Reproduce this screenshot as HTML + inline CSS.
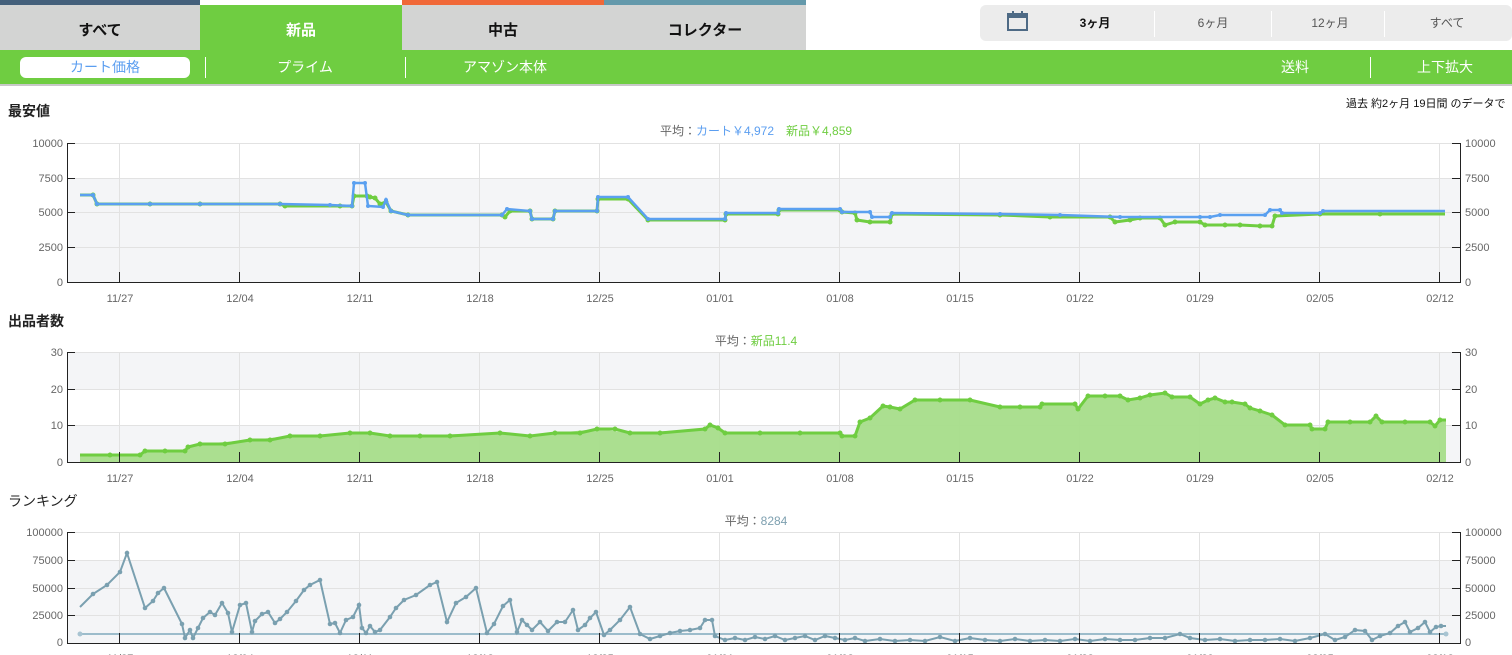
<!DOCTYPE html>
<html><head><meta charset="utf-8"><style>
*{margin:0;padding:0;box-sizing:border-box}
body{width:1512px;height:655px;overflow:hidden;background:#fff;font-family:"Liberation Sans","Noto Sans CJK JP",sans-serif;position:relative}
.a{position:absolute}
.tab{position:absolute;top:5px;height:45px;background:#d3d4d3;font-weight:bold;font-size:15px;text-align:center;line-height:52px;color:#111}
.sub{position:absolute;top:50px;left:0;width:1512px;height:36px;background:#6fcd41;border-bottom:2px solid #c8c8c8}
.sub span{position:absolute;top:0;line-height:34px;color:#fff;font-size:14px;text-align:center}
.sep{position:absolute;top:7px;width:1px;height:21px;background:#fff}
.ttl{position:absolute;left:8px;font-size:14px;font-weight:bold;color:#222}
</style></head><body>
<div class="a" style="left:0;top:0;width:200px;height:5px;background:#44607b"></div>
<div class="a" style="left:402px;top:0;width:202px;height:5px;background:#f06838"></div>
<div class="a" style="left:604px;top:0;width:202px;height:5px;background:#6499ab"></div>
<div class="tab" style="left:0;width:200px">すべて</div>
<div class="tab" style="left:200px;top:5px;width:202px;background:#6fcd41;color:#fff">新品</div>
<div class="tab" style="left:402px;width:202px">中古</div>
<div class="tab" style="left:604px;width:202px">コレクター</div>
<div class="a" style="left:980px;top:5px;width:532px;height:36px;background:#ececec;border-radius:6px"></div>
<svg class="a" style="left:1006px;top:10px" width="24" height="22" viewBox="0 0 24 22"><rect x="2" y="4" width="19" height="16" fill="none" stroke="#4e6a85" stroke-width="2"/><rect x="2" y="4" width="19" height="4" fill="#4e6a85"/><rect x="6" y="1" width="2" height="5" fill="#4e6a85"/><rect x="15" y="1" width="2" height="5" fill="#4e6a85"/></svg>
<div class="a" style="left:1060px;top:14px;width:70px;text-align:center;font-size:12px;font-weight:bold;color:#111">3ヶ月</div>
<div class="a" style="left:1154px;top:11px;width:1px;height:26px;background:#fff"></div>
<div class="a" style="left:1178px;top:14px;width:70px;text-align:center;font-size:12px;color:#555">6ヶ月</div>
<div class="a" style="left:1271px;top:11px;width:1px;height:26px;background:#fff"></div>
<div class="a" style="left:1295px;top:14px;width:70px;text-align:center;font-size:12px;color:#555">12ヶ月</div>
<div class="a" style="left:1384px;top:11px;width:1px;height:26px;background:#fff"></div>
<div class="a" style="left:1412px;top:14px;width:70px;text-align:center;font-size:12px;color:#555">すべて</div>
<div class="sub">
<div class="a" style="left:20px;top:7px;width:170px;height:21px;background:#fff;border-radius:6px"></div>
<span style="left:20px;width:170px;color:#5b9ef0">カート価格</span>
<div class="sep" style="left:205px"></div>
<span style="left:220px;width:170px">プライム</span>
<div class="sep" style="left:405px"></div>
<span style="left:420px;width:170px">アマゾン本体</span>
<span style="left:1245px;width:100px">送料</span>
<div class="sep" style="left:1370px"></div>
<span style="left:1385px;width:120px">上下拡大</span>
</div>
<div class="ttl" style="top:101px">最安値</div>
<div class="a" style="left:1346px;top:95px;font-size:11px;color:#111;white-space:nowrap">過去 約2ヶ月 19日間 のデータで</div>
<div class="a" style="left:0;top:122px;width:1512px;text-align:center;font-size:12px;color:#666">平均：<span style="color:#5b9ef0">カート￥4,972</span>　<span style="color:#6fcd41">新品￥4,859</span></div>
<div class="ttl" style="top:311px">出品者数</div>
<div class="a" style="left:0;top:332px;width:1512px;text-align:center;font-size:12px;color:#666">平均：<span style="color:#6fcd41">新品11.4</span></div>
<div class="ttl" style="top:491px;font-weight:normal">ランキング</div>
<div class="a" style="left:0;top:512px;width:1512px;text-align:center;font-size:12px;color:#666">平均：<span style="color:#7ea0b0">8284</span></div>

<svg class="a" style="left:0;top:0" width="1512" height="655" font-family="Liberation Sans, sans-serif" font-size="11" fill="#666">
<defs>
<marker id="mb" markerWidth="4" markerHeight="4" refX="2" refY="2" markerUnits="userSpaceOnUse"><circle cx="2" cy="2" r="2" fill="#5aa0f0"/></marker>
<marker id="mg" markerWidth="5" markerHeight="5" refX="2.5" refY="2.5" markerUnits="userSpaceOnUse"><circle cx="2.5" cy="2.5" r="2.5" fill="#6fcd41"/></marker>
<marker id="mr" markerWidth="5" markerHeight="5" refX="2.5" refY="2.5" markerUnits="userSpaceOnUse"><circle cx="2.5" cy="2.5" r="2.3" fill="#7aa0b0"/></marker>
</defs>
<!-- chart1 -->
<rect x="67" y="178" width="1393" height="104" fill="#f4f5f7"/>
<g stroke="#e2e2e2" stroke-width="1" fill="none">
<line x1="67" y1="143.5" x2="1460" y2="143.5"/><line x1="67" y1="178.5" x2="1460" y2="178.5"/><line x1="67" y1="212.5" x2="1460" y2="212.5"/><line x1="67" y1="247.5" x2="1460" y2="247.5"/>
<path d="M119.5 143V282M239.5 143V282M359.5 143V282M479.5 143V282M599.5 143V282M719.5 143V282M839.5 143V282M959.5 143V282M1079.5 143V282M1199.5 143V282M1319.5 143V282M1439.5 143V282"/>
</g>
<polyline fill="none" stroke="#6fcd41" stroke-width="3" marker-mid="url(#mg)" points="80,195 93,195 97,204 150,204 200,204 280,204 285,206 340,206 352,206 354,196 367,196 370,197 375,198 380,204 386,202 391,211 408,215 502,215 505,217 510,211 530,211 532,219 553,219 555,211 597,211 598,199 628,199 648,220 725,220 726,214 778,214 779,210 840,210 842,212 855,213 857,220 870,222 890,222 892,214 1000,215 1050,217 1110,217 1115,222 1130,220 1140,218 1160,218 1165,225 1175,222 1200,222 1205,225 1225,225 1240,225 1260,226 1272,226 1275,216 1320,214 1380,214 1445,214"/>
<polyline fill="none" stroke="#5aa0f0" stroke-width="2.5" marker-mid="url(#mb)" points="80,195 93,195 97,204 150,204 200,204 280,204 330,205 352,206 354,183 365,183 368,206 383,207 386,200 391,211 408,215 502,215 507,209 530,211 532,219 553,219 555,211 597,211 598,197 628,197 648,219 725,219 726,213 778,213 779,209 840,209 842,212 870,212 872,217 890,217 892,213 1000,214 1060,215 1120,217 1200,217 1210,217 1220,215 1265,215 1270,210 1280,210 1282,213 1320,213 1323,211 1445,211"/>
<g stroke="#222" stroke-width="1" fill="none"><path d="M67.5 143V282.5H1460.5V143M67 143.5h8M67 178.5h8M67 212.5h8M67 247.5h8M1460 143.5h-8M1460 178.5h-8M1460 212.5h-8M1460 247.5h-8"/>
<path d="M119.5 282V272M239.5 282V272M359.5 282V272M479.5 282V272M599.5 282V272M719.5 282V272M839.5 282V272M959.5 282V272M1079.5 282V272M1199.5 282V272M1319.5 282V272M1439.5 282V272"/></g>
<g text-anchor="end"><text x="63" y="147">10000</text><text x="63" y="182">7500</text><text x="63" y="216">5000</text><text x="63" y="251">2500</text><text x="63" y="286">0</text></g>
<g><text x="1465" y="147">10000</text><text x="1465" y="182">7500</text><text x="1465" y="216">5000</text><text x="1465" y="251">2500</text><text x="1465" y="286">0</text></g>
<g text-anchor="middle"><text x="120" y="302">11/27</text><text x="240" y="302">12/04</text><text x="360" y="302">12/11</text><text x="480" y="302">12/18</text><text x="600" y="302">12/25</text><text x="720" y="302">01/01</text><text x="840" y="302">01/08</text><text x="960" y="302">01/15</text><text x="1080" y="302">01/22</text><text x="1200" y="302">01/29</text><text x="1320" y="302">02/05</text><text x="1440" y="302">02/12</text></g>
<!-- chart2 -->
<rect x="67" y="352" width="1393" height="37" fill="#f4f5f7"/><rect x="67" y="425" width="1393" height="37" fill="#f4f5f7"/>
<g stroke="#e2e2e2" fill="none"><line x1="67" y1="352.5" x2="1460" y2="352.5"/><line x1="67" y1="389.5" x2="1460" y2="389.5"/><line x1="67" y1="425.5" x2="1460" y2="425.5"/>
<path d="M119.5 352V462M239.5 352V462M359.5 352V462M479.5 352V462M599.5 352V462M719.5 352V462M839.5 352V462M959.5 352V462M1079.5 352V462M1199.5 352V462M1319.5 352V462M1439.5 352V462"/></g>
<polygon fill="#a6dd8a" opacity="0.95" points="80,462 80,455 140,455 145,451 185,451 188,447 200,444 250,440 290,436 350,433 390,436 500,433 530,436 555,433 597,429 630,433 705,429 710,425 718,428 725,433 840,433 842,436 855,436 860,422 870,418 883,406 890,407 900,409 915,400 970,400 1000,407 1040,407 1042,404 1075,404 1078,409 1088,396 1120,396 1128,400 1140,398 1150,395 1165,393 1172,397 1190,397 1200,404 1208,400 1215,398 1225,402 1232,402 1245,404 1250,408 1260,411 1272,415 1285,425 1310,425 1312,429 1325,429 1328,422 1370,422 1376,416 1382,422 1430,422 1435,426 1440,420 1446,420 1446,462"/>
<polyline fill="none" stroke="#6fcd41" stroke-width="3" marker-mid="url(#mg)" points="80,455 110,455 140,455 145,451 165,451 185,451 188,447 200,444 225,444 250,440 270,440 290,436 320,436 350,433 370,433 390,436 420,436 450,436 500,433 530,436 555,433 580,433 597,429 615,429 630,433 660,433 705,429 710,425 718,428 725,433 760,433 800,433 840,433 842,436 855,436 860,422 870,418 883,406 890,407 900,409 915,400 940,400 970,400 1000,407 1020,407 1040,407 1042,404 1075,404 1078,409 1088,396 1105,396 1120,396 1128,400 1140,398 1150,395 1165,393 1172,397 1190,397 1200,404 1208,400 1215,398 1225,402 1232,402 1245,404 1250,408 1260,411 1272,415 1285,425 1310,425 1312,429 1325,429 1328,422 1350,422 1370,422 1376,416 1382,422 1405,422 1430,422 1435,426 1440,420 1446,420"/>
<g stroke="#222" fill="none"><path d="M67.5 352V462.5H1460.5V352M67 352.5h8M67 389.5h8M67 425.5h8M1460 352.5h-8M1460 389.5h-8M1460 425.5h-8"/>
<path d="M119.5 462V452M239.5 462V452M359.5 462V452M479.5 462V452M599.5 462V452M719.5 462V452M839.5 462V452M959.5 462V452M1079.5 462V452M1199.5 462V452M1319.5 462V452M1439.5 462V452"/></g>
<g text-anchor="end"><text x="63" y="356">30</text><text x="63" y="393">20</text><text x="63" y="429">10</text><text x="63" y="466">0</text></g>
<g><text x="1465" y="356">30</text><text x="1465" y="393">20</text><text x="1465" y="429">10</text><text x="1465" y="466">0</text></g>
<g text-anchor="middle"><text x="120" y="482">11/27</text><text x="240" y="482">12/04</text><text x="360" y="482">12/11</text><text x="480" y="482">12/18</text><text x="600" y="482">12/25</text><text x="720" y="482">01/01</text><text x="840" y="482">01/08</text><text x="960" y="482">01/15</text><text x="1080" y="482">01/22</text><text x="1200" y="482">01/29</text><text x="1320" y="482">02/05</text><text x="1440" y="482">02/12</text></g>
<!-- chart3 -->
<rect x="67" y="560" width="1393" height="83" fill="#f4f5f7"/>
<g stroke="#e2e2e2" fill="none"><line x1="67" y1="532.5" x2="1460" y2="532.5"/><line x1="67" y1="560.5" x2="1460" y2="560.5"/><line x1="67" y1="588.5" x2="1460" y2="588.5"/><line x1="67" y1="615.5" x2="1460" y2="615.5"/>
<path d="M119.5 532V643M239.5 532V643M359.5 532V643M479.5 532V643M599.5 532V643M719.5 532V643M839.5 532V643M959.5 532V643M1079.5 532V643M1199.5 532V643M1319.5 532V643M1439.5 532V643"/></g>
<line x1="80" y1="634" x2="1446" y2="634" stroke="#9cbccb" stroke-width="2"/>
<circle cx="80" cy="634" r="2.5" fill="#a8c4d2"/><circle cx="1446" cy="634" r="2.5" fill="#a8c4d2"/>
<polyline fill="none" stroke="#7aa0b0" stroke-width="2" marker-mid="url(#mr)" points="80,607 93,594 107,585 120,572 127,553 145,608 153,601 158,593 164,588 182,624 185,638 190,630 193,638 198,628 203,618 210,612 215,615 222,603 228,613 232,632 240,605 246,603 252,632 255,621 262,614 268,612 275,623 280,619 287,612 296,601 304,590 310,585 320,580 330,624 335,623 340,633 346,620 353,617 359,605 362,628 366,633 370,626 375,632 380,630 390,617 396,608 404,600 416,595 430,585 437,582 447,622 456,603 466,597 476,588 487,633 494,624 503,606 510,600 517,632 522,620 527,625 532,630 540,622 548,631 557,622 565,622 573,610 578,630 585,625 590,618 596,612 604,635 610,630 620,620 630,607 640,634 650,639 660,636 670,633 680,631 690,630 700,628 705,620 712,620 715,636 725,640 735,638 745,640 755,637 765,639 775,636 785,640 795,638 805,636 815,640 825,636 835,638 845,640 855,638 865,641 880,639 895,641 910,640 925,641 940,637 955,641 970,638 985,640 1000,641 1015,639 1030,641 1045,640 1060,641 1075,639 1090,641 1105,639 1120,640 1135,640 1150,638 1165,638 1180,634 1190,638 1205,640 1220,639 1235,641 1250,640 1265,640 1280,639 1295,641 1310,638 1325,634 1335,640 1345,637 1355,630 1365,631 1372,640 1380,636 1390,633 1398,626 1405,622 1410,632 1418,628 1425,622 1430,632 1436,627 1441,626 1446,626"/>
<g stroke="#222" fill="none"><path d="M67.5 532V643.5H1460.5V532M67 532.5h8M67 560.5h8M67 588.5h8M67 615.5h8M1460 532.5h-8M1460 560.5h-8M1460 588.5h-8M1460 615.5h-8"/>
<path d="M119.5 643V633M239.5 643V633M359.5 643V633M479.5 643V633M599.5 643V633M719.5 643V633M839.5 643V633M959.5 643V633M1079.5 643V633M1199.5 643V633M1319.5 643V633M1439.5 643V633"/></g>
<g text-anchor="end"><text x="63" y="536">100000</text><text x="63" y="564">75000</text><text x="63" y="592">50000</text><text x="63" y="619">25000</text><text x="63" y="646">0</text></g>
<g><text x="1465" y="536">100000</text><text x="1465" y="564">75000</text><text x="1465" y="592">50000</text><text x="1465" y="619">25000</text><text x="1465" y="646">0</text></g>
<g text-anchor="middle"><text x="120" y="662">11/27</text><text x="240" y="662">12/04</text><text x="360" y="662">12/11</text><text x="480" y="662">12/18</text><text x="600" y="662">12/25</text><text x="720" y="662">01/01</text><text x="840" y="662">01/08</text><text x="960" y="662">01/15</text><text x="1080" y="662">01/22</text><text x="1200" y="662">01/29</text><text x="1320" y="662">02/05</text><text x="1440" y="662">02/12</text></g>
</svg>
</body></html>
